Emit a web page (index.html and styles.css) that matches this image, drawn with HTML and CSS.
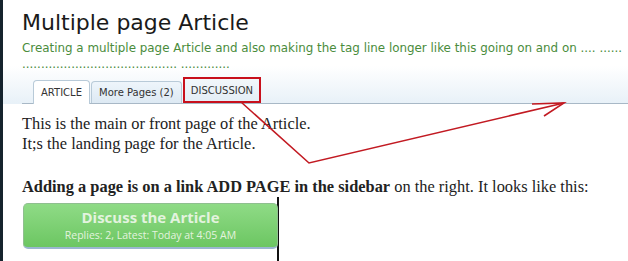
FILE: index.html
```html
<!DOCTYPE html>
<html>
<head>
<meta charset="utf-8">
<link rel="stylesheet" href="styles.css">
</head>
<body>
<div class="frame">
  <div class="page">
    <div class="header">
      <h1 class="title">Multiple page Article</h1>
      <p class="tagline">Creating a multiple page Article and also making the tag line longer like this going on and on .... ...... ......................................... .............</p>
      <div class="tabs">
        <span class="tab active">ARTICLE</span>
        <span class="tab">More Pages (2)</span>
        <span class="tab marked">DISCUSSION</span>
      </div>
    </div>
    <div class="content">
      <p class="para">This is the main or front page of the Article.<br>It;s the landing page for the Article.</p>
      <p class="para add"><b>Adding a page is on a link ADD PAGE in the sidebar</b> on the right. It looks like this:</p>
      <div class="shot">
        <div class="discuss">
          <div class="discuss-title">Discuss the Article</div>
          <div class="discuss-sub">Replies: 2, Latest: Today at 4:05 AM</div>
        </div>
      </div>
    </div>
  </div>
  <svg class="arrow" width="628" height="261" viewBox="0 0 628 261">
    <polyline points="241,102 309,163 564,103" fill="none" stroke="#c21a22" stroke-width="1.6"/>
    <polyline points="532,104 564,103 544,116" fill="none" stroke="#c21a22" stroke-width="1.6"/>
  </svg>
</div>
</body>
</html>
```
FILE: styles.css
```css
html, body { margin: 0; padding: 0; background: #fff; }
.frame {
  position: relative;
  width: 628px;
  height: 261px;
  overflow: hidden;
  border-left: 3px solid #15232d;
  box-sizing: border-box;
}
.page { padding-left: 19px; }
.header {
  background: linear-gradient(to bottom, #ffffff 0px, #ffffff 66px, #e8f1f8 103px);
  margin-left: -19px;
  padding-left: 19px;
}
.title {
  margin: 0;
  padding-top: 9px;
  font-family: "DejaVu Sans", sans-serif;
  font-weight: normal;
  font-size: 22px;
  line-height: 28px;
  color: #1a1a1a;
}
.tagline {
  margin: 3px 0 0 0;
  font-family: "DejaVu Sans", sans-serif;
  font-size: 11.9px;
  line-height: 16px;
  color: #4a8c3c;
}
.tabs {
  display: flex;
  align-items: flex-end;
  margin-top: 5px;
  padding-left: 11px;
  border-bottom: 1px solid #a8b8c6;
  height: 26px;
}
.tab {
  font-family: "DejaVu Sans", sans-serif;
  font-size: 10px;
  color: #333;
  height: 22px;
  line-height: 21px;
  padding: 0 7px;
  border: 1px solid #b8cad8;
  border-bottom: none;
  border-radius: 4px 4px 0 0;
  background: linear-gradient(#eef5fb, #dde9f3);
  margin-right: 1px;
  box-sizing: border-box;
}
.tab.active {
  background: #fff;
  height: 24px;
  line-height: 23px;
  margin-bottom: -1px;
}
.tab.marked {
  border: 2px solid #c8101c;
  border-radius: 0;
  margin-left: 0;
  padding: 0 6px;
  background: linear-gradient(#f2f7fb, #e4eef6);
  height: 26px;
  line-height: 24px;
}
.content { padding-top: 10px; }
.para {
  margin: 0;
  font-family: "Liberation Serif", serif;
  font-size: 16.4px;
  line-height: 20px;
  color: #222;
}
.add { margin-top: 23px; }
.shot {
  width: 257px;
  height: 64px;
  border-right: 2px solid #111;
  padding-top: 6px;
  box-sizing: border-box;
}
.discuss {
  width: 255px;
  height: 46px;
  margin-left: 1px;
  border-radius: 5px;
  border: 1px solid #8fbf8f;
  border-bottom: 2px solid #9ab6d0;
  background: linear-gradient(#8fdb86, #6cc662);
  box-sizing: border-box;
  text-align: center;
  color: #e3f3df;
  font-family: "Open Sans", sans-serif;
}
.discuss-title { font-size: 15px; font-weight: bold; line-height: 22px; padding-top: 2px; }
.discuss-sub { font-size: 10.5px; line-height: 14px; }
.arrow { position: absolute; left: -3px; top: 0; pointer-events: none; }
```
